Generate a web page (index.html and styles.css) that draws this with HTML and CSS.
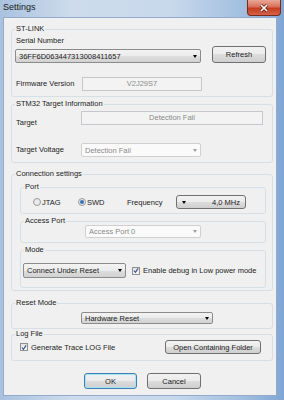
FILE: index.html
```html
<!DOCTYPE html>
<html lang="en">

<head>
    <meta charset="UTF-8">
    <title>Settings</title>
    <link rel="stylesheet" href="styles.css">
</head>

<body>
    <div class="window">
        <div class="titlebar">
            <span class="title">Settings</span>
            <span class="close-btn">
                <svg width="10" height="8" viewBox="0 0 10 8">
                    <path d="M2 1 L8 7 M8 1 L2 7" stroke="#5a1d12" stroke-width="3" />
                    <path d="M2 1 L8 7 M8 1 L2 7" stroke="#fff" stroke-width="1.6" />
                </svg>
            </span>
        </div>

        <div class="client">
            <!-- ST-LINK -->
            <div class="group group-stlink">
                <div class="group-title">ST-LINK</div>
                <div class="label label-serial">Serial Number</div>
                <div class="row row-serial">
                    <div class="combo combo-serial"><span>36FF6D063447313008411657</span><span class="arrow"></span></div>
                    <button class="btn btn-refresh">Refresh</button>
                </div>
                <div class="row row-fw">
                    <span class="label label-field">Firmware Version</span>
                    <div class="textbox textbox-fw">V2J29S7</div>
                </div>
            </div>

            <!-- STM32 Target Information -->
            <div class="group group-target">
                <div class="group-title">STM32 Target Information</div>
                <div class="row row-target">
                    <span class="label label-field label-target">Target</span>
                    <div class="textbox textbox-target">Detection Fail</div>
                </div>
                <div class="row row-voltage">
                    <span class="label label-field">Target Voltage</span>
                    <div class="combo combo-disabled combo-voltage"><span>Detection Fail</span><span class="arrow"></span></div>
                </div>
            </div>

            <!-- Connection settings -->
            <div class="group group-conn">
                <div class="group-title">Connection settings</div>

                <div class="group inner-group group-port">
                    <div class="group-title">Port</div>
                    <div class="row row-port">
                        <span class="option option-jtag"><span class="radio"></span>JTAG</span>
                        <span class="option option-swd"><span class="radio radio-on"></span>SWD</span>
                        <span class="freq-label">Frequency</span>
                        <button class="btn btn-freq"><span class="arrow"></span><span class="freq-value">4,0 MHz</span></button>
                    </div>
                </div>

                <div class="group inner-group group-ap">
                    <div class="group-title">Access Port</div>
                    <div class="combo combo-disabled combo-ap"><span>Access Port 0</span><span class="arrow"></span></div>
                </div>

                <div class="group inner-group group-mode">
                    <div class="group-title">Mode</div>
                    <div class="row row-mode">
                        <div class="combo combo-mode"><span>Connect Under Reset</span><span class="arrow"></span></div>
                        <span class="checkbox checkbox-mode"><svg width="7" height="7" viewBox="0 0 7 7"><path d="M1 3.5 L2.8 5.6 L6 1" fill="none" stroke="#3a4f8a" stroke-width="1.3" /></svg></span>
                        <span class="check-text">Enable debug in Low power mode</span>
                    </div>
                </div>
            </div>

            <!-- Reset Mode -->
            <div class="group group-reset">
                <div class="group-title">Reset Mode</div>
                <div class="combo combo-reset"><span>Hardware Reset</span><span class="arrow"></span></div>
            </div>

            <!-- Log File -->
            <div class="group group-log">
                <div class="group-title">Log File</div>
                <div class="row row-log">
                    <span class="checkbox checkbox-log"><svg width="7" height="7" viewBox="0 0 7 7"><path d="M1 3.5 L2.8 5.6 L6 1" fill="none" stroke="#3a4f8a" stroke-width="1.3" /></svg></span>
                    <span class="check-text">Generate Trace LOG File</span>
                    <button class="btn btn-folder">Open Containing Folder</button>
                </div>
            </div>

            <div class="dialog-buttons">
                <button class="btn btn-default btn-ok">OK</button>
                <button class="btn btn-cancel">Cancel</button>
            </div>
        </div>
    </div>
</body>

</html>
```

FILE: styles.css
```css
* {
    box-sizing: border-box;
}

body {
    margin: 0;
    font-family: 'Liberation Sans', Arial, sans-serif;
    font-size: 7.5px;
    color: #1c1c1c;
}

.window {
    width: 284px;
    height: 400px;
    display: flex;
    flex-direction: column;
    overflow: hidden;
    background: linear-gradient(to right, #a9c2e0 0%, #cddbeb 25%, #c8d9ec 60%, #a3bfe0 85%, #7fa6d4 100%);
}

/* barre de titre */
.titlebar {
    height: 18px;
    display: flex;
    align-items: flex-start;
    padding-left: 3px;
}

.title {
    font-size: 9px;
    line-height: 14px;
    color: #1a1a1a;
}

.close-btn {
    margin-left: auto;
    margin-right: 3px;
    width: 34px;
    height: 16px;
    border: 1px solid #7a2a1b;
    border-top: none;
    border-radius: 0 0 4px 4px;
    background: linear-gradient(#eaa896 0%, #d9715a 45%, #c43d1f 55%, #d4624a 100%);
    display: flex;
    align-items: center;
    justify-content: center;
}

.client {
    flex: 1;
    margin: 0 8px 5px 4px;
    padding-top: 11px;
    background: #f0f0f0;
    box-shadow: 0 0 0 1px #93aacb;
}

/* groupes */
.group {
    margin-left: 7px;
    width: 262px;
    border: 1px solid #d5dfe5;
    border-radius: 3px;
    padding: 0 3px;
}

.group-title {
    width: fit-content;
    margin-top: -6px;
    line-height: 10px;
    padding: 0 1px;
    background: #f0f0f0;
}

.inner-group {
    margin-left: 5px;
    width: 246px;
}

.label {
    line-height: 10px;
    padding-left: 1px;
}

.row {
    display: flex;
    align-items: center;
}

.label-field {
    flex-shrink: 0;
    width: 67px;
}

/* controles */
.combo {
    display: flex;
    align-items: center;
    height: 14px;
    padding: 0 3px 0 3px;
    border: 1px solid #8b8b8b;
    border-radius: 2px;
    background: linear-gradient(#f3f3f3 0%, #ebebeb 50%, #dedede 50%, #d2d2d2 100%);
    white-space: nowrap;
}

.combo-disabled {
    border-color: #d0d0d0;
    background: #fafafa;
    color: #8a8a8a;
}

.arrow {
    margin-left: auto;
    width: 0;
    height: 0;
    border-left: 2.5px solid transparent;
    border-right: 2.5px solid transparent;
    border-top: 3px solid #000;
}

.combo-disabled .arrow {
    border-top-color: #a0a0a0;
}

.textbox {
    height: 14px;
    line-height: 12px;
    border: 1px solid #c4c8cc;
    background: #f3f3f3;
    color: #8a8a8a;
    text-align: center;
}

.btn {
    font: inherit;
    color: #1c1c1c;
    padding: 0;
    border: 1px solid #707070;
    border-radius: 3px;
    background: linear-gradient(#f2f2f2 0%, #ebebeb 50%, #dddddd 50%, #cfcfcf 100%);
}

.btn-default {
    border-color: #3c7fb1;
    box-shadow: inset 0 0 1px 1px #a8e3f8;
}

.radio {
    display: inline-block;
    width: 8px;
    height: 8px;
    margin-right: 1px;
    border: 1px solid #9a9a9a;
    border-radius: 50%;
    background: #eaeaea;
    vertical-align: middle;
}

.radio-on {
    background: radial-gradient(circle, #2f5ea8 0%, #5d8ccc 45%, #eaeaea 55%);
}

.checkbox {
    flex-shrink: 0;
    width: 8px;
    height: 8px;
    border: 1px solid #8e8f8f;
    background: linear-gradient(#e4e4e4, #f8f8f8);
    display: flex;
    align-items: center;
    justify-content: center;
}

/* ST-LINK */
.group-stlink {
    padding-bottom: 5px;
}

.label-serial {
    margin-top: 2px;
}

.row-serial {
    height: 17px;
    align-items: flex-end;
}

.combo-serial {
    width: 186px;
}

.btn-refresh {
    margin-left: 11px;
    width: 54px;
    height: 17px;
}

.row-fw {
    margin-top: 14px;
    height: 14px;
}

.textbox-fw {
    width: 120px;
}

/* STM32 */
.group-target {
    margin-top: 7px;
    padding-bottom: 5px;
}

.row-target {
    margin-top: 2px;
    align-items: flex-start;
}

.label-target {
    width: 66px;
    margin-top: 7px;
}

.textbox-target {
    width: 182px;
}

.row-voltage {
    margin-top: 15px;
    height: 14px;
}

.row-voltage .label-field {
    width: 66px;
}

.combo-voltage {
    width: 120px;
}

/* Connection settings */
.group-conn {
    margin-top: 11px;
    padding-bottom: 2px;
}

.group-port {
    margin-top: 8px;
    padding-bottom: 4px;
}

.row-port {
    margin-top: 3px;
    height: 14px;
}

.option {
    display: flex;
    align-items: center;
}

.option-jtag {
    margin-left: 9px;
    width: 45px;
}

.option-swd {
    width: 49px;
}

.freq-label {
    width: 49px;
}

.btn-freq {
    width: 70px;
    height: 14px;
    display: flex;
    align-items: center;
    padding: 0 5px 0 5px;
}

.btn-freq .arrow {
    margin-left: 0;
}

.freq-value {
    margin-left: auto;
}

.group-ap {
    margin-top: 7px;
    padding-bottom: 4px;
}

.combo-ap {
    margin-top: -1px;
    margin-left: 61px;
    width: 116px;
    height: 13px;
}

.group-mode {
    margin-top: 7px;
    padding-bottom: 9px;
}

.row-mode {
    margin-top: 8px;
    height: 15px;
}

.combo-mode {
    margin-left: -1px;
    width: 103px;
    height: 15px;
}

.checkbox-mode {
    margin-left: 6px;
}

.check-text {
    margin-left: 3px;
    white-space: nowrap;
}

/* Reset Mode */
.group-reset {
    margin-top: 12px;
    padding-bottom: 4px;
}

.combo-reset {
    margin-top: 4px;
    margin-left: 66px;
    width: 132px;
    height: 12px;
}

/* Log File */
.group-log {
    margin-top: 5px;
    padding-bottom: 6px;
}

.row-log {
    margin-top: 1px;
    height: 14px;
}

.checkbox-log {
    margin-left: 5px;
}

.btn-folder {
    margin-left: auto;
    margin-right: 8px;
    width: 96px;
    height: 14px;
}

/* boutons du bas */
.dialog-buttons {
    display: flex;
    margin-top: 12px;
}

.btn-ok {
    margin-left: 80px;
    width: 53px;
    height: 16px;
}

.btn-cancel {
    margin-left: 10px;
    width: 54px;
    height: 16px;
}
```
